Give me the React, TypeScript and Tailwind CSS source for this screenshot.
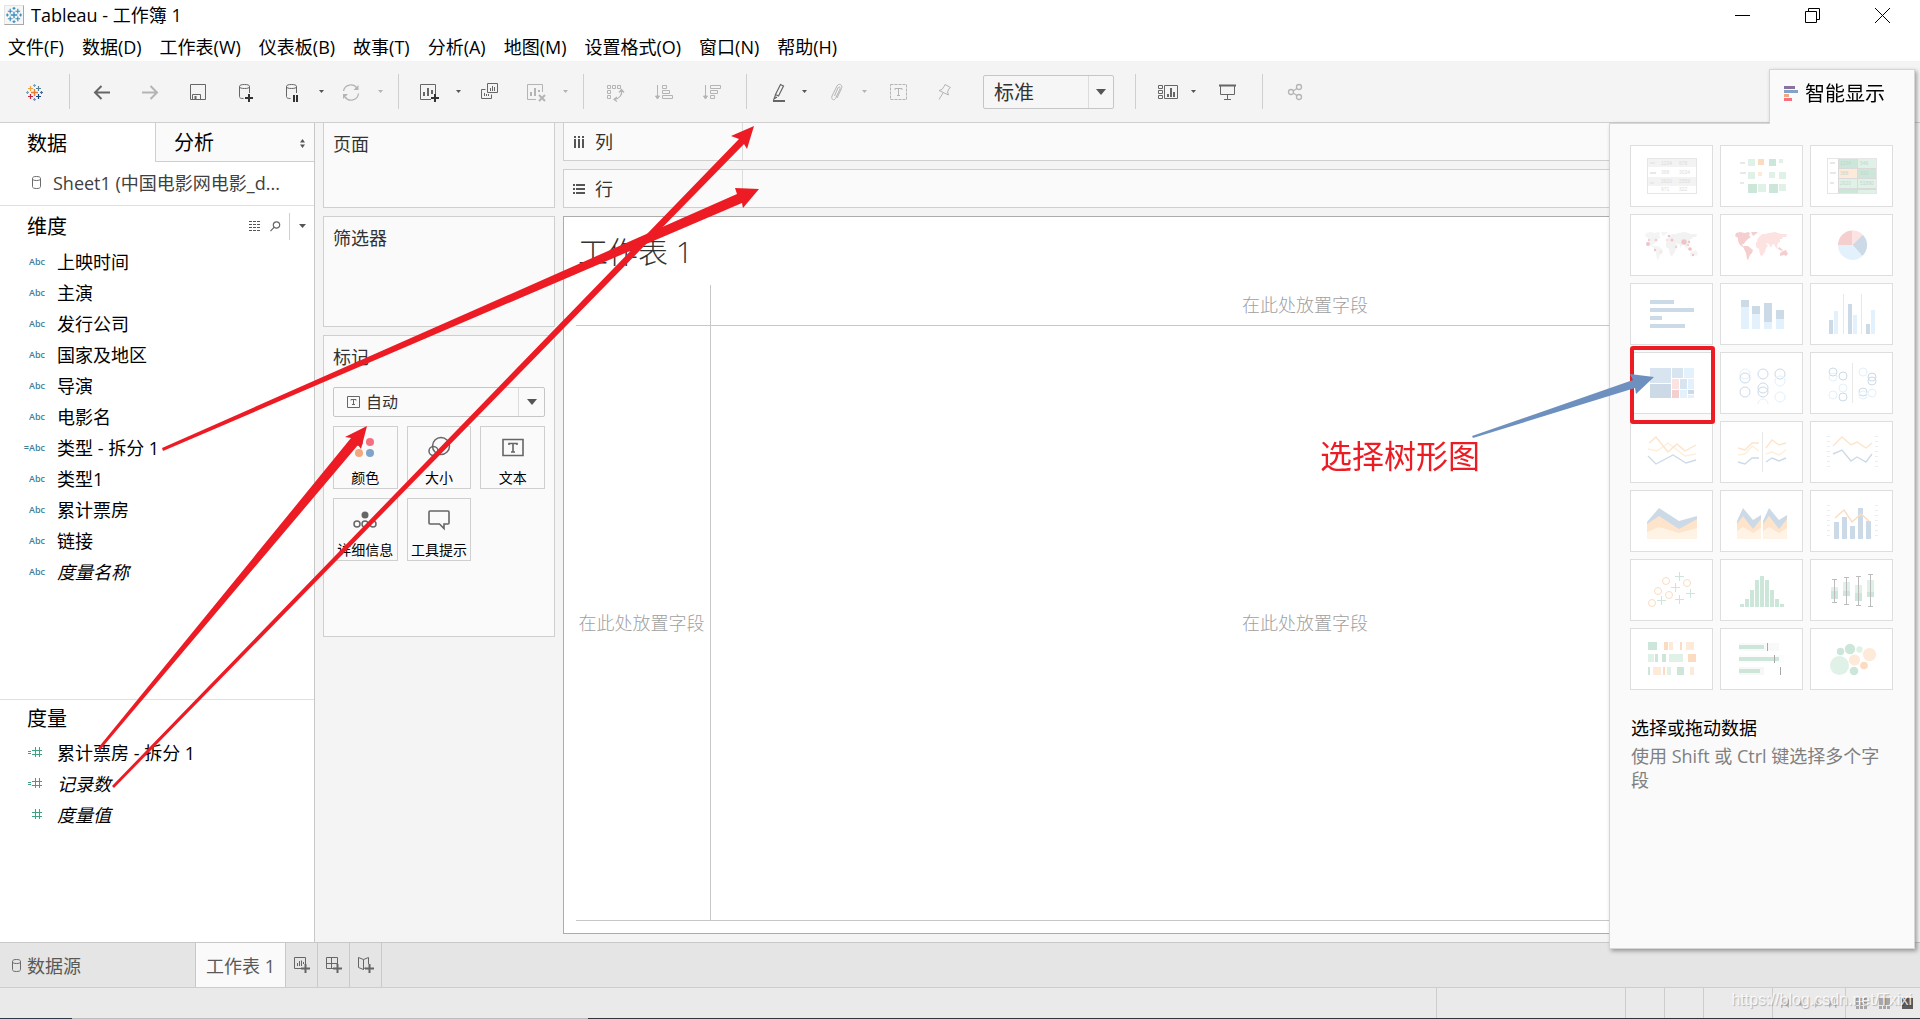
import type { ReactNode } from "react";
import clsx from "clsx";

const MENUS = [
  "文件(F)",
  "数据(D)",
  "工作表(W)",
  "仪表板(B)",
  "故事(T)",
  "分析(A)",
  "地图(M)",
  "设置格式(O)",
  "窗口(N)",
  "帮助(H)",
];

interface Field {
  name: string;
  calculated?: boolean;
  italic?: boolean;
}

const DIMENSIONS: Field[] = [
  { name: "上映时间" },
  { name: "主演" },
  { name: "发行公司" },
  { name: "国家及地区" },
  { name: "导演" },
  { name: "电影名" },
  { name: "类型 - 拆分 1", calculated: true },
  { name: "类型1" },
  { name: "累计票房" },
  { name: "链接" },
  { name: "度量名称", italic: true },
];

const MEASURES: Field[] = [
  { name: "累计票房 - 拆分 1", calculated: true },
  { name: "记录数", calculated: true, italic: true },
  { name: "度量值", italic: true },
];

// Show Me palette
const G = "#cce6da";
const LG = "#e0f2e8";
const O = "#fbdcc0";
const LO = "#feead9";
const Y = "#fef0d8";
const B = "#ccdae8";
const MB = "#d8e5f0";
const LB = "#e3f1fc";
const R = "#f5cfcf";
const LR = "#fde2e2";
const GR = "#e8e8e8";

type Box = [number, number, number, number, string];
type Dot = [number, number, number, string];

function Boxes({ items }: { items: Box[] }) {
  return (
    <>
      {items.map(([x, y, w, h, fill], i) => (
        <rect key={i} x={x} y={y} width={w} height={h} fill={fill} shapeRendering="crispEdges" />
      ))}
    </>
  );
}

function Dots({ items }: { items: Dot[] }) {
  return (
    <>
      {items.map(([cx, cy, r, fill], i) => (
        <circle key={i} cx={cx} cy={cy} r={r} fill={fill} />
      ))}
    </>
  );
}

function Rings({ items }: { items: Dot[] }) {
  return (
    <>
      {items.map(([cx, cy, r, stroke], i) => (
        <circle key={i} cx={cx} cy={cy} r={r} fill="none" stroke={stroke} />
      ))}
    </>
  );
}

function Lines({ items }: { items: [string, string][] }) {
  return (
    <>
      {items.map(([points, stroke], i) => (
        <polyline key={i} points={points} fill="none" stroke={stroke} strokeWidth="1.4" />
      ))}
    </>
  );
}

function Areas({ items }: { items: [string, string][] }) {
  return (
    <>
      {items.map(([points, fill], i) => (
        <polygon key={i} points={points} fill={fill} />
      ))}
    </>
  );
}

function Ticks() {
  return <path d="M18.5 15V47M66.5 15V47" stroke="#ededed" strokeWidth="3" strokeDasharray="1 4" />;
}

function Digits({ cells, fill }: { cells: [number, number, string][]; fill: string }) {
  return (
    <g fill={fill} fontSize="5" fontFamily="Liberation Sans, sans-serif">
      {cells.map(([x, y, t], i) => (
        <text key={i} x={x} y={y}>
          {t}
        </text>
      ))}
    </g>
  );
}

function WorldMap({ west, east }: { west: string; east: string }) {
  return (
    <g transform="translate(16 18)">
      <path
        fill={west}
        d="M0 1l4-1 5 1 3-1 2 1-1 3 2 1-3 2-3 3-1 2-2 0 1 2 2 1-1 1-4-3-2-4 0-3-3-2zM15 0l7 0-2 2-3 2-1-2zM8 14l4 0 5 4-1 3-2 2-2 5-1-1-1-6-2-4z"
      />
      <path
        fill={east}
        d="M20 10l5-1 4 1 3 4-2 2-1 4-3 4-2-1-1-6-3-2zM21 8l2-3 3-3 3 0 4-1 6-1 6 2 6 0-1 3-3 0-1 2-2 0 0 3-2 1-1 3 1 3-2-1-2-4-2 1-1 3-2-4-3-1-1 2-3-3-3 0-2-1z"
      />
      <path fill={west} d="M43 15l4 3-1 1-4-2zM44 21l3-2 3-1 2 4-2 2-2-1-4 1z" />
    </g>
  );
}

const THUMBS: { label: string; art: ReactNode }[] = [
  {
    label: "文本表",
    art: (
      <>
        <Boxes items={[[17, 13, 50, 9, "#f3f3f3"], [17, 32, 50, 9, "#f3f3f3"], [20, 17, 5, 2, GR], [20, 27, 6, 2, GR], [20, 37, 4, 2, GR]]} />
        <rect x="17.5" y="13.5" width="49" height="35" fill="none" stroke="#e6e6e6" />
        <Digits
          fill="#dcdcdc"
          cells={[[31, 20, "1234"], [49, 20, "678"], [31, 29, "368"], [49, 29, "3034"], [31, 38, "2620"], [49, 38, "2559"], [31, 46, "971"], [49, 46, "322"]]}
        />
      </>
    ),
  },
  {
    label: "热图",
    art: (
      <Boxes
        items={[
          [20, 17, 5, 2, GR], [28, 14, 7, 7, LG], [38, 14, 6, 6, O], [49, 14, 7, 7, G], [59, 14, 4, 4, LG],
          [20, 27, 6, 2, GR], [28, 27, 7, 7, LG], [38, 27, 4, 4, LO], [49, 27, 6, 6, LG], [59, 27, 7, 7, LG],
          [20, 37, 4, 2, GR], [28, 39, 9, 9, G], [38, 39, 8, 8, LG], [49, 39, 9, 9, G], [59, 39, 7, 7, LG],
        ]}
      />
    ),
  },
  {
    label: "突出显示表",
    art: (
      <>
        <Boxes
          items={[
            [28, 13, 39, 36, "#dadada"],
            [29, 14, 18, 9, G], [48, 14, 18, 9, LG], [29, 24, 18, 9, LO], [48, 24, 18, 9, G],
            [29, 34, 18, 9, LG], [48, 34, 18, 9, LG], [29, 45, 18, 3, G], [48, 45, 18, 3, LG],
            [20, 17, 5, 2, GR], [20, 27, 6, 2, GR], [20, 37, 4, 2, GR],
          ]}
        />
        <rect x="17.5" y="13.5" width="49" height="35" fill="none" stroke="#e6e6e6" />
        <Digits fill="#c3d6cb" cells={[[30, 20, "1234"], [50, 20, "546"], [30, 30, "368"], [50, 30, "310"], [30, 40, "2620"], [50, 40, "51890"]]} />
      </>
    ),
  },
  {
    label: "符号地图",
    art: (
      <>
        <WorldMap west="#f4f4f4" east="#f2f2f2" />
        <Dots
          items={[
            [18, 30, 2, "#eec4c8"], [19, 26, 1, "#eec4c8"], [26, 26, 1.5, R], [39, 22, 1.3, "#eec4c8"], [42, 26, 1.5, "#eec4c8"], [37, 26, 1.5, LR],
            [54, 28, 2.7, "#eec4c8"], [59, 28, 1.2, "#eec4c8"], [58, 31, 1.2, R], [60, 35, 1.8, "#f3c0c4"], [63, 41, 1.2, "#eec4c8"],
            [31, 38, 1.5, LR], [25, 36, 1.2, "#eec4c8"], [46, 33, 1.2, R],
          ]}
        />
      </>
    ),
  },
  { label: "填充地图", art: <WorldMap west={R} east={LR} /> },
  {
    label: "饼图",
    art: (
      <>
        <path d="M42.5 31H28A14.5 14.5 0 0 1 42.5 16.5z" fill={R} />
        <path d="M42.5 31V16.5A14.5 14.5 0 0 1 52.7 20.7z" fill={LR} />
        <path d="M42.5 31L52.7 20.7A14.5 14.5 0 0 1 52.2 42z" fill={B} />
        <path d="M42.5 31L52.2 42A14.5 14.5 0 0 1 28 31z" fill={LB} />
      </>
    ),
  },
  { label: "水平条", art: <Boxes items={[[20, 17, 24, 4, B], [20, 25, 44, 4, B], [20, 33, 12, 4, B], [20, 41, 35, 4, B]]} /> },
  {
    label: "堆叠条",
    art: (
      <Boxes
        items={[
          [21, 17, 8, 7, B], [21, 24, 8, 22, LB], [32, 23, 8, 8, B], [32, 31, 8, 15, LB],
          [44, 20, 8, 19, B], [44, 39, 8, 7, LB], [56, 27, 8, 9, B], [56, 36, 8, 10, LB],
        ]}
      />
    ),
  },
  {
    label: "并排条",
    art: (
      <Boxes
        items={[
          [19, 37, 4, 14, B], [24, 28, 4, 23, LB], [33, 11, 1, 40, GR], [38, 21, 4, 30, B],
          [43, 32, 4, 19, LB], [51, 11, 1, 40, GR], [56, 41, 4, 10, B], [61, 27, 4, 24, LB],
        ]}
      />
    ),
  },
  {
    label: "树状图",
    art: (
      <Boxes
        items={[
          [20, 16, 21, 15, MB], [20, 32, 21, 14, B], [42, 16, 11, 10, MB], [54, 16, 10, 10, LB], [42, 27, 7, 10, LR], [50, 27, 7, 10, MB],
          [58, 27, 6, 10, LB], [42, 38, 7, 8, R], [50, 38, 7, 8, LB], [58, 38, 6, 4, B], [58, 43, 6, 3, LB],
        ]}
      />
    ),
  },
  {
    label: "圆视图",
    art: (
      <>
        <Rings
          items={[
            [25, 22, 5, LB], [25, 26, 5, B], [25, 40, 5, B], [43, 22, 5, B], [43, 36, 5, B],
            [43, 40, 5, B], [60, 22, 5, B], [60, 29, 5, LB], [60, 45, 5, LB],
          ]}
        />
        <path d="M38 52a5 5 0 0 1 10 0" fill="none" stroke={LB} />
      </>
    ),
  },
  {
    label: "并排圆",
    art: (
      <>
        <Boxes items={[[42, 11, 1, 40, GR]]} />
        <Rings
          items={[
            [23, 20, 4, B], [23, 25, 4, LB], [33, 24, 4, B], [33, 36, 4, LB], [23, 43, 4, LB], [33, 45, 4, B],
            [53, 20, 4, LB], [62, 25, 4, B], [62, 29, 4, B], [53, 40, 4, B], [53, 43, 4, LB], [62, 41, 4, LB],
          ]}
        />
      </>
    ),
  },
  {
    label: "线(连续)",
    art: <Lines items={[["18,28 27,30 38,22 55,35 66,33", Y], ["19,22 26,16 38,31 47,23 55,30 66,24", "#fde4cb"], ["18,35 26,43 43,34 56,42 66,39", B]]} />,
  },
  {
    label: "线(离散)",
    art: (
      <>
        <Boxes items={[[42, 11, 1, 40, GR]]} />
        <Lines
          items={[
            ["18,27 25,29 32,22 39,22", "#fde4cb"], ["46,27 52,19 59,24 66,22", "#fde4cb"], ["18,34 25,33 32,25 39,30", Y],
            ["46,33 52,31 59,34 66,29", Y], ["18,41 25,43 32,37 39,37", B], ["46,41 52,37 59,40 66,37", B],
          ]}
        />
      </>
    ),
  },
  {
    label: "双线",
    art: (
      <>
        <Ticks />
        <Lines items={[["23,25 32,16 41,24 47,21 56,27 62,22", "#fde4cb"], ["23,33 32,29 41,40 47,36 56,41 62,33", B]]} />
      </>
    ),
  },
  {
    label: "面积图(连续)",
    art: (
      <Areas
        items={[
          ["17,32 29,18 49,31 67,26 67,49 17,49", B],
          ["17,34 29,26 49,39 67,29 67,49 17,49", "#fde4cb"],
          ["17,42 29,37 49,43 67,38 67,49 17,49", "#fff3e6"],
        ]}
      />
    ),
  },
  {
    label: "面积图(离散)",
    art: (
      <Areas
        items={[
          ["17,31 23,18 33,30 41,25 41,49 17,49", B],
          ["17,34 23,26 33,39 41,29 41,49 17,49", "#fde4cb"],
          ["17,41 23,37 33,43 41,38 41,49 17,49", "#fff3e6"],
          ["43,31 49,18 59,30 67,25 67,49 43,49", B],
          ["43,34 49,26 59,39 67,29 67,49 43,49", "#fde4cb"],
          ["43,41 49,37 59,43 67,38 67,49 43,49", "#fff3e6"],
        ]}
      />
    ),
  },
  {
    label: "双组合",
    art: (
      <>
        <Ticks />
        <Boxes items={[[24, 32, 5, 17, B], [32, 27, 5, 22, B], [40, 36, 5, 13, B], [48, 18, 5, 31, B], [56, 31, 5, 18, B]]} />
        <Lines items={[["25,28 34,20 42,32 51,24 60,32", O]]} />
      </>
    ),
  },
  {
    label: "散点图",
    art: (
      <>
        <Rings items={[[22, 44, 3.5, O], [28, 32, 3.5, O], [36, 22, 3.5, O], [39, 36, 3.5, O], [57, 24, 3.5, O]]} />
        <path d="M27 41.5h9m-4.5-4.5v9M41 28.5h9m-4.5-4.5v9M45 17.5h9m-4.5-4.5v9M45 40.5h9m-4.5-4.5v9M56 34.5h9m-4.5-4.5v9" stroke={G} />
      </>
    ),
  },
  {
    label: "直方图",
    art: (
      <Boxes
        items={[
          [20, 45, 4, 3, G], [25, 40, 4, 8, G], [30, 31, 4, 17, G], [35, 21, 4, 27, G], [40, 17, 4, 31, G],
          [45, 21, 4, 27, G], [50, 31, 4, 17, G], [55, 40, 4, 8, G], [60, 45, 4, 3, G],
        ]}
      />
    ),
  },
  {
    label: "盒须图",
    art: (
      <>
        <Boxes
          items={[
            [21, 28, 7, 4, LG], [21, 32, 7, 8, G], [33, 23, 7, 9, LG], [33, 32, 7, 5, G],
            [45, 26, 7, 8, LG], [45, 34, 7, 8, G], [57, 21, 7, 12, LG], [57, 33, 7, 5, G],
          ]}
        />
        <path
          d="M24.5 20.5v23M22 20.5h5M22 43.5h5M36.5 18.5v27M34 18.5h5M34 45.5h5M48.5 17.5v29M46 17.5h5M46 46.5h5M60.5 15.5v32M58 15.5h5M58 47.5h5"
          stroke="#bcbcbc"
        />
      </>
    ),
  },
  {
    label: "甘特图",
    art: (
      <Boxes
        items={[
          [18, 14, 9, 8, G], [34, 14, 4, 8, O], [39, 14, 4, 8, LO], [50, 14, 2, 8, O], [56, 14, 8, 8, LO],
          [18, 26, 6, 8, LG], [25, 26, 3, 8, G], [32, 26, 4, 8, G], [39, 26, 14, 8, LG], [58, 26, 8, 8, O],
          [18, 39, 2, 8, G], [23, 39, 8, 8, LO], [33, 39, 2, 8, O], [37, 39, 4, 8, LG], [47, 39, 7, 8, G], [60, 39, 4, 8, LO],
        ]}
      />
    ),
  },
  {
    label: "标靶图",
    art: (
      <Boxes
        items={[
          [19, 15, 40, 8, "#f9f9f9"], [19, 27, 45, 8, "#fcfcfc"], [19, 39, 25, 8, "#f7f7f7"],
          [19, 17, 25, 4, G], [19, 29, 40, 4, G], [19, 41, 21, 4, G],
          [47, 15, 1, 8, "#a8a8a8"], [54, 27, 1, 8, "#a8a8a8"], [60, 39, 1, 8, "#a8a8a8"],
        ]}
      />
    ),
  },
  {
    label: "填充气泡图",
    art: (
      <Dots
        items={[
          [29.5, 37.5, 9.5, LG], [30.5, 23.5, 3.7, G], [40, 21, 5.2, G], [49.5, 21.5, 3.2, LG],
          [59.5, 26.5, 6.6, LO], [44.5, 32, 5.6, LO], [54, 37.5, 3.8, O], [44, 43, 4.3, G],
        ]}
      />
    ),
  },
];

function Svg({ children }: { children: ReactNode }) {
  return (
    <svg width="24" height="24" viewBox="0 0 24 24" fill="none" stroke="currentColor" strokeWidth="1" aria-hidden="true">
      {children}
    </svg>
  );
}

function Tool({ label, className, disabled, children }: { label: string; className?: string; disabled?: boolean; children: ReactNode }) {
  return (
    <button
      type="button"
      aria-label={label}
      disabled={disabled}
      className={clsx("h-6 w-6 shrink-0", disabled ? "text-[#b4b4b4]" : "text-[#666]", className)}
    >
      <Svg>{children}</Svg>
    </button>
  );
}

function Caret({ label, className, disabled }: { label: string; className: string; disabled?: boolean }) {
  return (
    <button
      type="button"
      aria-label={label}
      disabled={disabled}
      className={clsx("flex h-6 w-2 shrink-0 items-center justify-center", disabled ? "text-[#b4b4b4]" : "text-[#555]", className)}
    >
      <svg width="5" height="3" viewBox="0 0 5 3" fill="currentColor" aria-hidden="true">
        <path d="M0 0h5L2.5 3z" />
      </svg>
    </button>
  );
}

function Divider({ className }: { className: string }) {
  return <span className={clsx("h-[35px] w-px shrink-0 bg-[#cfcfcf]", className)} />;
}

function Cylinder() {
  return (
    <svg width="9" height="13" viewBox="0 0 9 13" fill="none" stroke="#6b6b6b" aria-hidden="true">
      <path d="M.5 2.5C.5 1 2 .5 4.5.5S8.5 1 8.5 2.5V10.5C8.5 12 7 12.5 4.5 12.5S.5 12 .5 10.5zM.5 2.5C.5 4 2 4.5 4.5 4.5S8.5 4 8.5 2.5" />
    </svg>
  );
}

// The crosses of the Tableau mark: x, y, arm length, colour
const MARK: [number, number, number, string][] = [
  [12, 12, 3.5, "#eb7b30"],
  [8, 8, 2.5, "#f0a23c"],
  [16, 8, 2.5, "#4f8499"],
  [8, 16, 2.5, "#c8263a"],
  [16, 16, 2.5, "#1f447e"],
  [12, 5, 1.5, "#7aa3b5"],
  [12, 19, 1.5, "#8190b8"],
  [5, 12, 1.5, "#7aa3b5"],
  [19, 12, 1.5, "#56699c"],
];

function TableauMark({ color }: { color?: string }) {
  return (
    <>
      {MARK.map(([x, y, r, c], i) => (
        <path
          key={i}
          d={`M${x - r + 0.5} ${y + 0.5}H${x + r + 0.5}M${x + 0.5} ${y - r + 0.5}V${y + r + 0.5}`}
          stroke={color ?? c}
          strokeWidth={i === 0 ? 1.4 : 1.2}
        />
      ))}
    </>
  );
}

function TitleBar() {
  return (
    <header className="flex h-[30px] items-center justify-between">
      <h1 className="flex items-center gap-[7px] pl-1 text-[18px] leading-6">
        <span className="border border-[#e4e4e4] border-r-[#a8a8a8] border-b-[#a8a8a8] bg-[#f6f6f6]">
          <svg width="18" height="18" viewBox="3 3 19 19" fill="none" aria-hidden="true">
            <TableauMark color="#3c8dbc" />
          </svg>
        </span>
        Tableau - 工作簿 1
      </h1>
      <div className="flex pr-[3px]">
        <button type="button" aria-label="最小化" className="flex h-7 w-[70px] items-center justify-center">
          <span className="h-px w-[15px] bg-black" />
        </button>
        <button type="button" aria-label="还原" className="flex h-7 w-[70px] items-center justify-center">
          <svg width="15" height="15" viewBox="0 0 15 15" fill="none" stroke="#000" aria-hidden="true">
            <path d="M.5 3.5h11v11H.5zM3.5 3.5V.5h11v11h-3" />
          </svg>
        </button>
        <button type="button" aria-label="关闭" className="flex h-7 w-[70px] items-center justify-center">
          <svg width="15" height="15" viewBox="0 0 15 15" fill="none" stroke="#000" aria-hidden="true">
            <path d="M0 0l15 15M15 0L0 15" />
          </svg>
        </button>
      </div>
    </header>
  );
}

function Toolbar() {
  return (
    <div className="flex h-[61px] shrink-0 items-center bg-[#f4f4f4] pl-[22px]">
      <Tool label="开始页面">
        <TableauMark />
      </Tool>
      <Divider className="ml-[23px]" />
      <Tool label="撤消" className="ml-5">
        <path d="M20 12.5H5M11.5 6L5 12.5l6.5 6.5" strokeWidth="2" />
      </Tool>
      <Tool label="重做" className="ml-6" disabled>
        <path d="M4 12.5h15M12.5 6l6.5 6.5-6.5 6.5" strokeWidth="2" />
      </Tool>
      <Tool label="保存" className="ml-6">
        <path d="M4.5 4.5h15v15h-15zM6.5 19V14.5h8V19" />
        <path d="M8.5 16h2v3h-2z" fill="currentColor" stroke="none" />
      </Tool>
      <Tool label="新建数据源" className="ml-6">
        <path d="M5.5 6.5C5.5 5 7.5 4.5 10.5 4.5S15.5 5 15.5 6.5 13.5 8.5 10.5 8.5 5.5 8 5.5 6.5v10c0 1.5 1 2 4 2M15.5 6.5V13" />
        <path d="M15 14v8M11 18h8" stroke="#333" strokeWidth="2" />
      </Tool>
      <Tool label="暂停自动更新" className="ml-[22px]">
        <path d="M6.5 6.5C6.5 5 8.5 4.5 11.5 4.5S16.5 5 16.5 6.5 14.5 8.5 11.5 8.5 6.5 8 6.5 6.5v10c0 1.5 1 2 4 2M16.5 6.5V13" />
        <path d="M14 15v7M17 15v7" stroke="#333" strokeWidth="2" />
      </Tool>
      <Caret label="自动更新选项" className="ml-[13px]" />
      <Tool label="刷新" className="ml-[14px]" disabled>
        <path d="M4.5 11A7.5 7.5 0 0 1 18 8M19.5 13.5A7.5 7.5 0 0 1 6 17" strokeWidth="1.3" />
        <path d="M19.5 5v5h-5zM4 19v-5h5z" fill="currentColor" stroke="none" />
      </Tool>
      <Caret label="刷新选项" className="ml-[13px]" disabled />
      <Divider className="ml-[14px]" />
      <Tool label="新建工作表" className="ml-5">
        <path d="M12 19.5H1.5v-15h15V14" />
        <path d="M5 16v-4M9 16V8M13 14v-4" strokeWidth="2" />
        <path d="M16 14v8M12 18h8" stroke="#333" strokeWidth="2" />
      </Tool>
      <Caret label="新建选项" className="ml-[11px]" />
      <Tool label="复制" className="ml-[17px]">
        <path d="M8.5 3.5h10v9h-10zM6.5 9.5h-4v9h10v-4M5.5 13v3M7.5 14v2M9.5 14v2" />
        <path d="M11.5 8v3M13.5 6v5M15.5 7v4" />
      </Tool>
      <Tool label="清除工作表" className="ml-[22px]" disabled>
        <path d="M11 19.5H2.5v-15h15V12" />
        <path d="M6 16v-4M10 16V8M14 12v-2" strokeWidth="2" />
        <path d="M14 15l6 6M20 15l-6 6" strokeWidth="2" />
      </Tool>
      <Caret label="清除选项" className="ml-3" disabled />
      <Divider className="ml-[14px]" />
      <Tool label="交换行和列" className="ml-5" disabled>
        <path d="M3.5 5.5h3v3h-3zM8.5 5.5h3v3h-3zM13.5 5.5h3v3h-3zM3.5 10.5h3v3h-3zM3.5 15.5h3v3h-3z" />
        <path d="M17.5 10c1 5-2 8.5-7 9.5M15 12.5l2.5-3 2.5 3M13 17l-3 2.5 3 2" strokeWidth="1.2" />
      </Tool>
      <Tool label="升序排序" className="ml-6" disabled>
        <path d="M5.5 5v12M3.5 16h4l-2 3z" fill="currentColor" />
        <path d="M10.5 5.5h4v3h-4zM10.5 10.5h7v3h-7zM10.5 15.5h10v3h-10z" />
      </Tool>
      <Tool label="降序排序" className="ml-6" disabled>
        <path d="M5.5 5v12M3.5 16h4l-2 3z" fill="currentColor" />
        <path d="M10.5 5.5h10v3h-10zM10.5 10.5h7v3h-7zM10.5 15.5h4v3h-4z" />
      </Tool>
      <Divider className="ml-[22px]" />
      <Tool label="突出显示" className="ml-5">
        <path d="M13.5 4.5l3 1.5-5 10-3-1.5zM8.5 15l-1.5 4 3-2" strokeWidth="1.2" />
        <path d="M6 21h12" strokeWidth="2" />
      </Tool>
      <Caret label="突出显示选项" className="ml-[9px]" />
      <Tool label="组成员" className="ml-4" disabled>
        <path d="M13 18l4.500-9.500c1.500-3.500-2.500-6-4.500-2.500l-5 10c-1.200 3.500 2 5 3.500 2.500l4.500-9.500c.8-2-1.300-2.700-2-1.200L10.500 16" />
      </Tool>
      <Caret label="组选项" className="ml-3" disabled />
      <Tool label="显示标记标签" className="ml-[18px]" disabled>
        <path d="M4.5 4.5h16v15h-16z" strokeDasharray="3 1" />
        <path d="M9 10V8.5h7V10M12.5 8.5v7M11 15.5h3" />
      </Tool>
      <Tool label="固定轴" className="ml-[22px]" disabled>
        <path d="M13 4.5l5.5 3-1.500 1.200-1.500 3.300 1 3-9.500-4.500 3-1 2-3zM11 13l-4 6.5" />
      </Tool>
      <div className="relative ml-[27px] h-[34px] w-[131px] shrink-0">
        <select
          aria-label="适合"
          className="h-full w-full appearance-none rounded-[2px] border border-[#c6c6c6] bg-[#f6f6f6] pt-0.5 pl-[10px] text-[20px] leading-7 text-[#333]"
        >
          <option>标准</option>
        </select>
        <span className="pointer-events-none absolute inset-y-px right-px flex w-[25px] items-center justify-center border-l border-[#dcdcdc]">
          <svg width="10" height="6" viewBox="0 0 10 6" fill="#555" aria-hidden="true">
            <path d="M0 0h10L5 6z" />
          </svg>
        </span>
      </div>
      <Divider className="ml-[21px]" />
      <Tool label="显示/隐藏卡" className="ml-5">
        <path d="M2.5 5.5h4v3h-4zM2.5 10.5h4v3h-4zM2.5 15.5h4v3h-4zM8.5 5.5h13v13h-13z" />
        <path d="M12 17v-3M15 17V8M18 17v-5" strokeWidth="2" />
      </Tool>
      <Caret label="卡选项" className="ml-[9px]" />
      <Tool label="演示模式" className="ml-[18px]">
        <path d="M4 5.5h17" strokeWidth="2" />
        <path d="M5.5 6v8.5h14V6M12.5 14.5v5M9 19.5h7" />
      </Tool>
      <Divider className="ml-[23px]" />
      <Tool label="共享" className="ml-5" disabled>
        <circle cx="8" cy="12" r="2.5" strokeWidth="1.3" />
        <circle cx="16" cy="7" r="2.5" strokeWidth="1.3" />
        <circle cx="16" cy="17" r="2.5" strokeWidth="1.3" />
        <path d="M10 11l4-2.500M10 13l4 2.500" strokeWidth="1.3" />
      </Tool>
    </div>
  );
}

function AbcIcon({ calculated }: { calculated?: boolean }) {
  return (
    <span className="flex w-[19px] items-center justify-end text-[9px] leading-3 font-semibold text-[#3f7f98]">
      {calculated && <span>=</span>}
      <span>Abc</span>
    </span>
  );
}

function NumberIcon({ calculated }: { calculated?: boolean }) {
  return (
    <svg width="19" height="11" viewBox="0 0 19 11" fill="none" stroke="#3fa383" aria-hidden="true">
      {calculated && <path d="M2 4.5h3M2 6.5h3" />}
      <path d="M6 3.5h10M6 7.5h10M9.5 0v10M13.5 0v10" />
    </svg>
  );
}

function FieldList({ fields, icon }: { fields: Field[]; icon: (f: Field) => ReactNode }) {
  return (
    <ul>
      {fields.map((f) => (
        <li key={f.name} className="flex h-[31px] items-center gap-3 pl-[26px] text-[18px] leading-6">
          {icon(f)}
          <span className={clsx(f.italic && "italic")}>{f.name}</span>
        </li>
      ))}
    </ul>
  );
}

function DataPane() {
  return (
    <aside className="flex w-[315px] shrink-0 flex-col border-r border-[#c8c8c8] bg-white">
      <div className="flex h-[39px] shrink-0 text-[20px] leading-7">
        <button type="button" className="flex w-[155px] items-center pt-0.5 pl-[27px]">
          数据
        </button>
        <button
          type="button"
          className="flex flex-1 items-center justify-between border-b border-l border-[#cfcfcf] bg-[#fafafa] pt-0.5 pr-[9px] pl-[18px]"
        >
          分析
          <svg width="5" height="9" viewBox="0 0 5 9" fill="#555" aria-hidden="true">
            <path d="M0 3.500h5L2.500 0zM0 5.500h5L2.500 9z" />
          </svg>
        </button>
      </div>
      <div className="flex h-[44px] shrink-0 items-center gap-3 border-b border-[#e0e0e0] pb-0.5 pl-8 text-[18px] leading-6 text-[#404040]">
        <Cylinder />
        Sheet1 (中国电影网电影_d...
      </div>
      <section className="flex-1">
        <div className="flex h-10 items-center pr-2 pl-[27px]">
          <h2 className="flex-1 pt-px text-[20px] leading-7">维度</h2>
          <button type="button" aria-label="查看数据" className="mr-[9px]">
            <svg width="12" height="10" viewBox="0 0 12 10" fill="none" stroke="#555" aria-hidden="true">
              <path d="M0 .5h12M0 3.5h12M0 6.5h12M0 9.5h12" strokeDasharray="3 1" />
            </svg>
          </button>
          <button type="button" aria-label="查找字段" className="mr-2">
            <svg width="11" height="11" viewBox="0 0 11 11" fill="none" stroke="#666" strokeWidth="1.2" aria-hidden="true">
              <circle cx="6.5" cy="4" r="3.2" />
              <path d="M4.2 6.2L.5 10.2" />
            </svg>
          </button>
          <span className="h-[27px] w-px bg-[#cfcfcf]" />
          <button type="button" aria-label="维度菜单" className="ml-[9px]">
            <svg width="7" height="4" viewBox="0 0 7 4" fill="#555" aria-hidden="true">
              <path d="M0 0h7L3.5 4z" />
            </svg>
          </button>
        </div>
        <FieldList fields={DIMENSIONS} icon={(f) => <AbcIcon calculated={f.calculated} />} />
      </section>
      <section className="h-[243px] border-t border-[#e0e0e0]">
        <h2 className="flex h-[37px] items-center pt-px pl-[27px] text-[20px] leading-7">度量</h2>
        <FieldList fields={MEASURES} icon={(f) => <NumberIcon calculated={f.calculated} />} />
      </section>
    </aside>
  );
}

function MarkButton({ label, children }: { label: string; children: ReactNode }) {
  return (
    <button
      type="button"
      className="flex h-[63px] flex-col items-center justify-between border border-[#cfcfcf] bg-[#fafafa] pt-2 text-[14px] leading-5 whitespace-nowrap text-black"
    >
      <Svg>{children}</Svg>
      {label}
    </button>
  );
}

function Cards() {
  return (
    <div className="flex w-[232px] shrink-0 flex-col gap-2 text-[18px] leading-6 text-[#333]">
      <section className="h-[86px] border border-[#cfcfcf] bg-[#fafafa] px-[9px] pt-[9px]">
        <h2>页面</h2>
      </section>
      <section className="h-[111px] border border-[#cfcfcf] bg-[#fafafa] px-[9px] pt-[9px]">
        <h2>筛选器</h2>
      </section>
      <section className="h-[302px] border border-[#cfcfcf] bg-[#fafafa] px-[9px] pt-[9px]">
        <h2>标记</h2>
        <div className="relative mt-[18px] h-[30px]">
          <select
            aria-label="标记类型"
            className="h-full w-full appearance-none rounded-[2px] border border-[#c6c6c6] bg-[#fafafa] pl-8 text-[16px] leading-6"
          >
            <option>自动</option>
          </select>
          <svg
            width="13"
            height="12"
            viewBox="0 0 13 12"
            fill="none"
            stroke="#666"
            className="pointer-events-none absolute top-[9px] left-[14px]"
            aria-hidden="true"
          >
            <path d="M.5.5h12v11H.5zM4 4.5V3.5h5v1M6.5 3.5v5M5 8.5h3" />
          </svg>
          <span className="pointer-events-none absolute inset-y-px right-px flex w-[26px] items-center justify-center border-l border-[#dcdcdc]">
            <svg width="10" height="6" viewBox="0 0 10 6" fill="#555" aria-hidden="true">
              <path d="M0 0h10L5 6z" />
            </svg>
          </span>
        </div>
        <div className="mt-[9px] grid grid-cols-3 gap-[9px]">
          <MarkButton label="颜色">
            <g stroke="none">
              <circle cx="6" cy="7" r="4" fill="#8a73a0" />
              <circle cx="17" cy="7" r="4" fill="#f56f80" />
              <circle cx="6" cy="18" r="4" fill="#f4a77c" />
              <circle cx="17" cy="18" r="4" fill="#80a3ca" />
            </g>
          </MarkButton>
          <MarkButton label="大小">
            <circle cx="14" cy="11" r="8.5" stroke="#666" strokeWidth="1.5" />
            <circle cx="6.5" cy="16" r="4.5" stroke="#666" strokeWidth="1.5" />
          </MarkButton>
          <MarkButton label="文本">
            <path d="M2 4.5h20v16H2zM8 10V8.5h8V10M12 8.5v8.5M10 17h4" stroke="#666" strokeWidth="1.6" />
          </MarkButton>
          <MarkButton label="详细信息">
            <circle cx="12" cy="8" r="3.5" fill="#666" stroke="none" />
            <circle cx="4" cy="17" r="3" stroke="#666" strokeWidth="1.5" />
            <circle cx="12" cy="17" r="3" stroke="#666" strokeWidth="1.5" />
            <circle cx="20" cy="17" r="3" stroke="#666" strokeWidth="1.5" />
          </MarkButton>
          <MarkButton label="工具提示">
            <path d="M3 4h18q1 0 1 1v11q0 1-1 1h-4v4.5L12.5 17H3q-1 0-1-1V5q0-1 1-1z" stroke="#666" strokeWidth="1.6" />
          </MarkButton>
        </div>
      </section>
    </div>
  );
}

function Shelf({ label, children }: { label: string; children: ReactNode }) {
  return (
    <div className="flex h-[39px] shrink-0 border border-[#cfcfcf] bg-[#fafafa]">
      <div className="flex w-[179px] items-center gap-[10px] border-r border-[#dcdcdc] pt-px pl-[9px] text-[18px] leading-6 text-[#333]">
        <svg width="12" height="12" viewBox="0 0 12 12" fill="#555" shapeRendering="crispEdges" aria-hidden="true">
          {children}
        </svg>
        {label}
      </div>
    </div>
  );
}

function DropHint() {
  return <span className="text-[18px] leading-6 font-light whitespace-nowrap text-[#a0a0a0]">在此处放置字段</span>;
}

function Worksheet() {
  return (
    <main className="flex min-w-0 flex-1 flex-col gap-2 pr-2">
      <Shelf label="列">
        <path d="M1 0h2v2H1zM5 0h2v2H5zM9 0h2v2H9zM1 3h2v9H1zM5 3h2v9H5zM9 3h2v9H9z" />
      </Shelf>
      <Shelf label="行">
        <path d="M0 1h2v2H0zM0 5h2v2H0zM0 9h2v2H0zM3 1h9v2H3zM3 5h9v2H3zM3 9h9v2H3z" />
      </Shelf>
      <div className="flex flex-1 flex-col border border-[#acacac] bg-white px-3 pb-3">
        <h2 className="h-[68px] pt-[15px] pl-0.5 text-[30px] leading-10 font-light text-[#333]">工作表 1</h2>
        <div className="grid flex-1 grid-cols-[135px_1fr] grid-rows-[41px_1fr] border-b border-[#c8c8c8]">
          <div className="border-r border-b border-[#c8c8c8]" />
          <div className="flex items-center justify-center border-b border-[#c8c8c8]">
            <DropHint />
          </div>
          <div className="flex items-center justify-center border-r border-[#c8c8c8] pr-[3px]">
            <DropHint />
          </div>
          <div className="flex items-center justify-center">
            <DropHint />
          </div>
        </div>
      </div>
    </main>
  );
}

function ShowMe() {
  return (
    <aside className="absolute top-[69px] right-[5px] bottom-[70px] flex w-[306px] flex-col drop-shadow-[2px_2px_2px_rgba(0,0,0,0.35)]">
      <button
        type="button"
        className="z-10 -mb-px flex h-[55px] w-[146px] items-center gap-[7px] self-end border border-b-0 border-[#d6d6d6] bg-[#fafafa] pb-[7px] pl-[14px] text-[20px] leading-7"
      >
        <svg width="14" height="15" viewBox="0 0 14 15" shapeRendering="crispEdges" aria-hidden="true">
          <path fill="#8a73a0" d="M0 0h11v3H0z" />
          <path fill="#80a3ca" d="M0 4h14v3H0z" />
          <path fill="#f4a77c" d="M0 8h5v3H0z" />
          <path fill="#f56f80" d="M0 12h8v3H0z" />
        </svg>
        智能显示
      </button>
      <div className="flex-1 border border-[#d6d6d6] bg-[#fafafa] pt-[21px] pr-[21px] pl-5">
        <div className="grid grid-cols-3 gap-[7px]">
          {THUMBS.map((t) => (
            <button key={t.label} type="button" aria-label={t.label} className="h-[62px] border border-[#dedede] bg-white">
              <svg width="81" height="60" viewBox="1 1 81 60" fill="none" aria-hidden="true">
                {t.art}
              </svg>
            </button>
          ))}
        </div>
        <p className="mt-[26px] pl-px text-[18px] leading-6">选择或拖动数据</p>
        <p className="mt-1 pl-px text-[18px] leading-6 text-[#808080]">使用 Shift 或 Ctrl 键选择多个字段</p>
      </div>
    </aside>
  );
}

function SheetTabs() {
  return (
    <nav className="flex h-[45px] shrink-0 border-t border-[#c8c8c8] bg-[#e5e5e5] text-[18px] leading-6 text-[#595959]">
      <button type="button" className="flex w-[196px] items-center gap-1.5 border-r border-[#c8c8c8] pt-px pl-3">
        <Cylinder />
        数据源
      </button>
      <button type="button" className="w-[90px] border-r border-[#c8c8c8] bg-[#fafafa] pt-px">
        工作表 1
      </button>
      <button type="button" aria-label="新建工作表标签" className="flex w-8 items-center justify-center border-r border-[#c8c8c8] text-[#666]">
        <Svg>
          <path d="M11 15.5H4.5v-11h11V11M7.5 13v-3M9.5 13V8M11.5 13V7.5M13.5 11V9" />
          <path d="M15.5 11v9M11 15.5h9" strokeWidth="2" />
        </Svg>
      </button>
      <button type="button" aria-label="新建仪表板" className="flex w-8 items-center justify-center border-r border-[#c8c8c8] text-[#666]">
        <Svg>
          <path d="M11 15.5H4.5v-11h11V11M4.5 10.5h11M9.5 4.5v11" />
          <path d="M15.5 11v9M11 15.5h9" strokeWidth="2" />
        </Svg>
      </button>
      <button type="button" aria-label="新建故事" className="flex w-8 items-center justify-center border-r border-[#c8c8c8] text-[#666]">
        <Svg>
          <path d="M11 14.5l-1.5 2-5-2v-10l5 2 5-2V11M9.5 6.5v10" />
          <path d="M15.5 11v9M11 15.5h9" strokeWidth="2" />
        </Svg>
      </button>
    </nav>
  );
}

function StatusBar() {
  return (
    <footer className="relative flex h-8 shrink-0 flex-col border-t border-[#cdcdcd] bg-[#eaeaea]">
      <div className="flex flex-1 justify-end">
        <span className="w-[189px] border-l border-[#cdcdcd]" />
        <span className="w-[39px] border-l border-[#cdcdcd]" />
        <span className="w-[39px] border-l border-[#cdcdcd]" />
        <span className="w-[69px] border-l border-[#cdcdcd]" />
        <span className="flex w-[73px] items-center justify-center border-l border-[#cdcdcd]">
          <svg width="56" height="9" viewBox="0 0 56 9" fill="#bdbdbd" aria-hidden="true">
            <path d="M0 0h1.5v9H0zM8 0v9L2 4.5zM22 0v9l-5-4.5zM34 0v9l5-4.5zM48 0v9l5-4.5zM54 0h1.5v9H54z" />
          </svg>
        </span>
        <span className="flex w-[75px] items-center justify-end gap-3 border-l border-[#cdcdcd] pr-[7px]">
          <svg width="11" height="11" viewBox="0 0 11 11" fill="#a6a6a6" aria-hidden="true">
            <path d="M0 0h3v3H0zM4 0h3v3H4zM8 0h3v3H8zM0 4h3v3H0zM4 4h3v3H4zM8 4h3v3H8zM0 8h3v3H0zM4 8h3v3H4zM8 8h3v3H8z" />
          </svg>
          <svg width="11" height="11" viewBox="0 0 11 11" fill="#a6a6a6" aria-hidden="true">
            <path d="M0 0h11v7H0zM0 8h3v3H0zM4 8h3v3H4zM8 8h3v3H8z" />
          </svg>
          <svg width="11" height="11" viewBox="0 0 11 11" fill="#5c5c5c" aria-hidden="true">
            <path d="M0 0h11v11H0z" />
          </svg>
        </span>
      </div>
      <div className="flex h-px">
        <span className="w-[72px] bg-[#2e3a4a]" />
        <span className="w-[516px] bg-[#bdbdbd]" />
        <span className="flex-1 bg-[#34343f]" />
      </div>
      <span className="absolute top-0 right-2 font-['Liberation_Sans',sans-serif] text-[16px] leading-6 whitespace-nowrap text-white/80 [text-shadow:1px_1px_1px_rgba(0,0,0,0.25)]">
        https://blog.csdn.net/Txixi
      </span>
    </footer>
  );
}

// Hand-drawn callouts lying over the whole window
function Annotations() {
  return (
    <div className="pointer-events-none absolute top-0 left-0">
      <svg width="1920" height="1019" viewBox="0 0 1920 1019" aria-hidden="true">
        <g fill="#ed1c24">
          <path d="M162 448L737 194 735 188 759 189 743 208 742 203 163 451z" />
          <path d="M112 786L739 139 731 136 754 126 747 149 744 144 114 788z" />
          <path d="M98 748L351 438 345 437 367 426 361 449 358 445 100 750z" />
        </g>
        <rect x="1632" y="348" width="81" height="74" rx="1" fill="none" stroke="#ed1c24" strokeWidth="4" />
        <path d="M1472 436L1633 380 1630 374 1654 377 1636 394 1635 388 1473 438z" fill="#6e90bf" />
      </svg>
      <p className="absolute top-[436px] left-[1320px] text-[32px] leading-10 whitespace-nowrap text-[#ed1c24]">选择树形图</p>
    </div>
  );
}

export default function App() {
  return (
    <div className="relative flex min-h-screen flex-col overflow-hidden bg-white font-['Open_Sans','Noto_Sans_CJK_SC',sans-serif] text-black">
      <TitleBar />
      <nav className="flex h-[31px] shrink-0 items-center gap-[18px] pt-0.5 pl-2 text-[18px] leading-6">
        {MENUS.map((m) => (
          <button key={m} type="button">
            {m}
          </button>
        ))}
      </nav>
      <Toolbar />
      <div className="flex flex-1 border-t border-[#cfcfcf] bg-[#f4f4f4]">
        <DataPane />
        <div className="-mt-px flex min-w-0 flex-1 gap-2 pb-2 pl-2">
          <Cards />
          <Worksheet />
        </div>
      </div>
      <SheetTabs />
      <StatusBar />
      <ShowMe />
      <Annotations />
    </div>
  );
}
